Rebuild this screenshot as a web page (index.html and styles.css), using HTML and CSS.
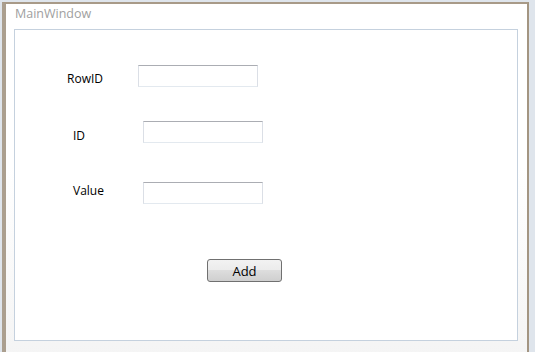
FILE: index.html
```html
<!DOCTYPE html>
<html>

<head>
  <title>MainWindow</title>
  <meta charset="UTF-8">
  <link rel="stylesheet" href="styles.css">
</head>

<body>
  <div class="window">
    <div class="title">MainWindow</div>
    <div class="panel">
      <div class="row row-first">
        <label class="lbl lbl-rowid" for="rowid">RowID</label>
        <input class="box" type="text" id="rowid">
      </div>
      <div class="row row-id">
        <label class="lbl lbl-id" for="id">ID</label>
        <input class="box" type="text" id="id">
      </div>
      <div class="row row-value">
        <label class="lbl lbl-value" for="value">Value</label>
        <input class="box" type="text" id="value">
      </div>
      <button class="add">Add</button>
    </div>
  </div>
</body>

</html>
```

FILE: styles.css
```css
html,
body {
  margin: 0;
  height: 100%;
  overflow: hidden;
}

body {
  background-color: #dfe5ec;
  font-family: "Open Sans", "Liberation Sans", sans-serif;
}

.window {
  box-sizing: border-box;
  margin: 2px 0 0 2px;
  width: 527px;
  height: 360px;
  border-top: 2px solid #a89a88;
  border-left: 4px solid #ab9f8f;
  border-right: 2px solid #a39582;
  background: linear-gradient(#ffffff 0%, #ffffff 45%, #f4f4f4 100%);
  padding: 0 9px 0 8px;
}

.title {
  height: 25px;
  padding-left: 1px;
  font-size: 12.5px;
  line-height: 20px;
  color: #a0a0a0;
}

.panel {
  box-sizing: border-box;
  height: 312px;
  border: 1px solid #c5d1de;
  background-color: #fff;
  padding-top: 35px;
}

.row {
  display: flex;
  align-items: flex-start;
  padding-left: 58px;
}

.row-first {
  padding-left: 52px;
}

.row-id {
  margin-top: 34px;
}

.row-value {
  margin-top: 38px;
}

.lbl {
  font-size: 12px;
  line-height: 16px;
  color: #000;
  width: 70px;
}

.lbl-rowid {
  width: 71px;
  margin-top: 6px;
}

.lbl-id {
  margin-top: 7px;
}

.lbl-value {
  margin-top: 1px;
}

.box {
  box-sizing: border-box;
  width: 120px;
  height: 22px;
  margin: 0;
  padding: 0 3px;
  border: 1px solid #dbdfe6;
  border-top-color: #abadb3;
  border-bottom-color: #e3e9ef;
  border-radius: 0;
  outline: none;
  background: #fff;
  font-family: inherit;
  font-size: 12px;
}

.add {
  display: block;
  box-sizing: border-box;
  width: 75px;
  height: 23px;
  margin: 55px 0 0 192px;
  padding: 0;
  border: 1px solid #707070;
  border-radius: 3px;
  background: linear-gradient(#f2f2f2 0%, #ebebeb 50%, #dddddd 50%, #cfcfcf 100%);
  font-family: inherit;
  font-size: 13px;
  color: #000;
  cursor: pointer;
}
```
